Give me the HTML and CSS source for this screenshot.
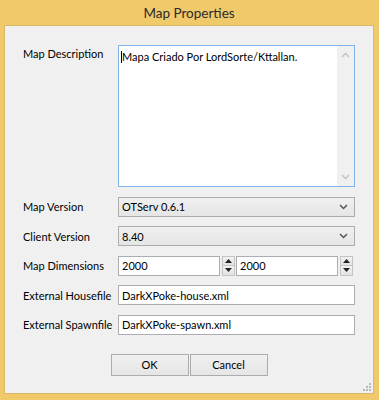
FILE: index.html
```html
<!DOCTYPE html>
<html>
<head>
    <title>Map Properties</title>
    <link rel="stylesheet" href="styles.css">
</head>
<body>
    <div class="window">
        <div class="titlebar">Map Properties</div>
        <div class="client">
            <div class="form">
                <label class="label top">Map Description</label>
                <div class="memo">
                    <div class="memo-text"><span class="caret"></span>Mapa Criado Por LordSorte/Kttallan.</div>
                    <div class="vscroll">
                        <svg width="9" height="6" viewBox="0 0 9 6"><polyline points="1,5 4.5,1.5 8,5" fill="none" stroke="#c2c2c2" stroke-width="1.4"/></svg>
                        <svg width="9" height="6" viewBox="0 0 9 6"><polyline points="1,1 4.5,4.5 8,1" fill="none" stroke="#c2c2c2" stroke-width="1.4"/></svg>
                    </div>
                </div>

                <label class="label">Map Version</label>
                <div class="combo">
                    <span>OTServ 0.6.1</span>
                    <svg width="9" height="6" viewBox="0 0 9 6"><polyline points="1,1 4.5,4.5 8,1" fill="none" stroke="#555" stroke-width="1.5"/></svg>
                </div>

                <label class="label">Client Version</label>
                <div class="combo">
                    <span>8.40</span>
                    <svg width="9" height="6" viewBox="0 0 9 6"><polyline points="1,1 4.5,4.5 8,1" fill="none" stroke="#555" stroke-width="1.5"/></svg>
                </div>

                <label class="label">Map Dimensions</label>
                <div class="spins">
                    <div class="spin">
                        <input class="edit" type="text" value="2000">
                        <div class="arrows">
                            <div class="arrow"><svg width="7" height="4" viewBox="0 0 7 4"><polygon points="0,4 3.5,0 7,4" fill="#222"/></svg></div>
                            <div class="arrow"><svg width="7" height="4" viewBox="0 0 7 4"><polygon points="0,0 3.5,4 7,0" fill="#222"/></svg></div>
                        </div>
                    </div>
                    <div class="spin">
                        <input class="edit" type="text" value="2000">
                        <div class="arrows">
                            <div class="arrow"><svg width="7" height="4" viewBox="0 0 7 4"><polygon points="0,4 3.5,0 7,4" fill="#222"/></svg></div>
                            <div class="arrow"><svg width="7" height="4" viewBox="0 0 7 4"><polygon points="0,0 3.5,4 7,0" fill="#222"/></svg></div>
                        </div>
                    </div>
                </div>

                <label class="label">External Housefile</label>
                <input class="edit" type="text" value="DarkXPoke-house.xml">

                <label class="label">External Spawnfile</label>
                <input class="edit" type="text" value="DarkXPoke-spawn.xml">
            </div>

            <div class="buttons">
                <button class="btn">OK</button>
                <button class="btn">Cancel</button>
            </div>

            <div class="grip">
                <svg width="8" height="8" viewBox="0 0 8 8" fill="#b8b8b8">
                    <rect x="6" y="0" width="2" height="2"/>
                    <rect x="3" y="3" width="2" height="2"/><rect x="6" y="3" width="2" height="2"/>
                    <rect x="0" y="6" width="2" height="2"/><rect x="3" y="6" width="2" height="2"/><rect x="6" y="6" width="2" height="2"/>
                </svg>
            </div>
        </div>
    </div>
</body>
</html>
```

FILE: styles.css
```css
html, body {
    margin: 0;
    padding: 0;
}

body {
    background-color: #f0c96a;
    font-family: Lato, "Noto Sans", sans-serif;
    font-size: 11px;
    color: #000000;
}

.window {
    width: 379px;
    height: 400px;
    box-sizing: border-box;
    padding: 0 5px 6px 4px;
    display: flex;
    flex-direction: column;
}

.titlebar {
    height: 25px;
    line-height: 26px;
    text-align: center;
    font-size: 13.5px;
    color: #2b2b2b;
}

.client {
    position: relative;
    flex: 1;
    background-color: #f0f0f0;
    border: 1px solid #d9b868;
    padding: 19px 17px 0 18px;
}

.form {
    display: grid;
    grid-template-columns: 95px 237px;
    grid-template-rows: 142px repeat(5, 20px);
    row-gap: 9.5px;
}

.label {
    align-self: center;
    white-space: nowrap;
}

.label.top {
    align-self: start;
    padding-top: 2px;
}

.memo {
    display: flex;
    background-color: #ffffff;
    border: 1px solid #7eb4ea;
    box-sizing: border-box;
}

.memo-text {
    flex: 1;
    padding: 3px 2px;
    line-height: 15px;
}

.caret {
    display: inline-block;
    width: 1px;
    height: 12px;
    background-color: #000000;
    vertical-align: -2px;
}

.vscroll {
    width: 17px;
    background-color: #f0f0f0;
    display: flex;
    flex-direction: column;
    justify-content: space-between;
    align-items: center;
    padding: 6px 0 6px;
}

.combo {
    display: flex;
    align-items: center;
    justify-content: space-between;
    box-sizing: border-box;
    border: 1px solid #acacac;
    background: linear-gradient(#f0f0f0, #e5e5e5);
    padding: 0 6px 0 3px;
}

.edit {
    box-sizing: border-box;
    height: 20px;
    width: 100%;
    margin: 0;
    border: 1px solid #abadb3;
    background-color: #ffffff;
    font-family: inherit;
    font-size: 11px;
    color: #000000;
    padding: 0 3px;
    outline: none;
}

.spins {
    display: flex;
    gap: 1px;
}

.spin {
    display: flex;
    gap: 2px;
}

.spin .edit {
    width: 102px;
}

.arrows {
    width: 13px;
    display: flex;
    flex-direction: column;
}

.arrow {
    flex: 1;
    display: flex;
    align-items: center;
    justify-content: center;
    box-sizing: border-box;
    border: 1px solid #c4c4c4;
    background: linear-gradient(#f2f2f2, #e3e3e3);
}

.arrow + .arrow {
    border-top: none;
}

.buttons {
    display: flex;
    justify-content: center;
    gap: 1px;
    margin-top: 19px;
    margin-left: -1px;
}

.btn {
    width: 78px;
    height: 22px;
    margin: 0;
    border: 1px solid #acacac;
    background: linear-gradient(#f0f0f0, #e5e5e5);
    font-family: inherit;
    font-size: 11px;
    color: #000000;
    padding: 0;
}

.grip {
    position: absolute;
    right: 2px;
    bottom: 2px;
    line-height: 0;
}
```
